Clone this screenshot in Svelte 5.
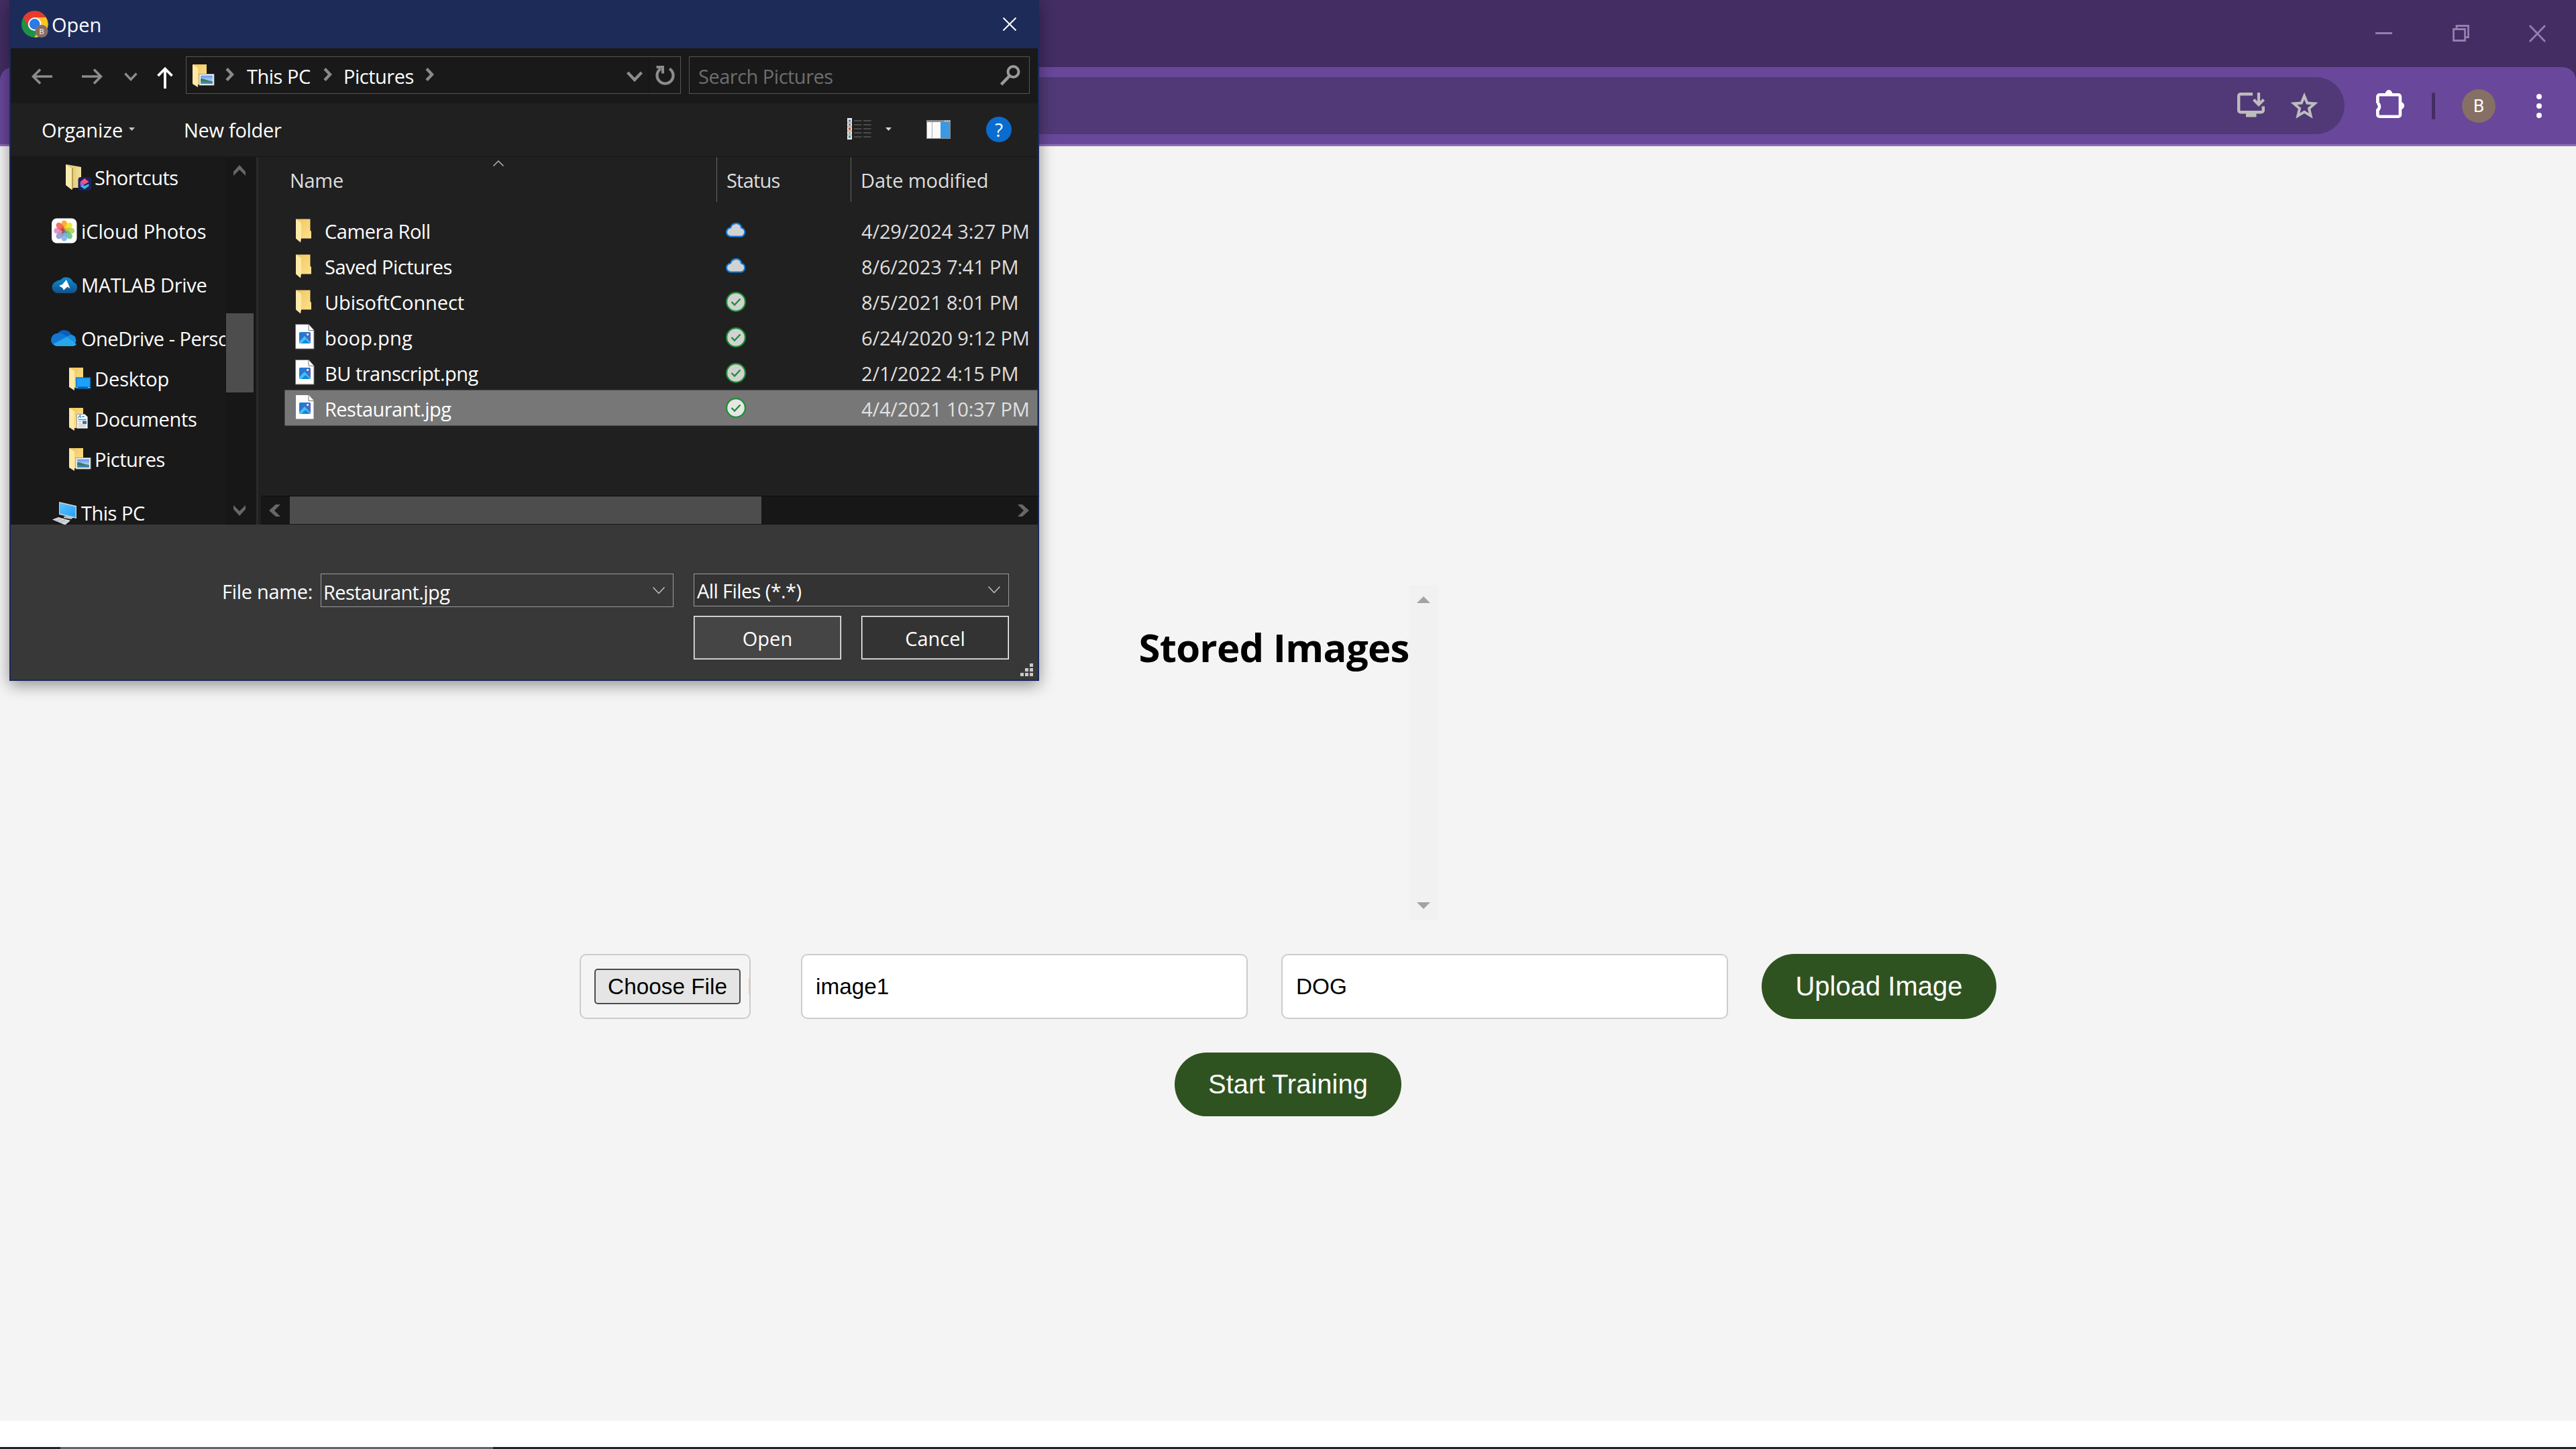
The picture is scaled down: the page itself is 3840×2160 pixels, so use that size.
<script>
  const sidebar = [
    { label: 'Shortcuts', icon: 'shortcuts', child: true, pace: 'snug' },
    { label: 'iCloud Photos', icon: 'icloud', pace: 'even' },
    { label: 'MATLAB Drive', icon: 'matlab', pace: 'close' },
    { label: 'OneDrive - Personal', icon: 'onedrive', pace: 'snug' },
    { label: 'Desktop', icon: 'desktop', child: true, pace: 'even' },
    { label: 'Documents', icon: 'documents', child: true, pace: 'close' },
    { label: 'Pictures', icon: 'pictures', child: true, pace: 'snug' },
    { label: 'This PC', icon: 'pc', pace: 'snug' }
  ];

  const files = [
    { name: 'Camera Roll', kind: 'folder', status: 'cloud', date: '4/29/2024 3:27 PM', pace: 'snug' },
    { name: 'Saved Pictures', kind: 'folder', status: 'cloud', date: '8/6/2023 7:41 PM', pace: 'snug' },
    { name: 'UbisoftConnect', kind: 'folder', status: 'synced', date: '8/5/2021 8:01 PM', pace: 'even' },
    { name: 'boop.png', kind: 'image', status: 'synced', date: '6/24/2020 9:12 PM', pace: 'loose' },
    { name: 'BU transcript.png', kind: 'image', status: 'synced', date: '2/1/2022 4:15 PM', pace: 'snug' },
    { name: 'Restaurant.jpg', kind: 'image', status: 'synced', date: '4/4/2021 10:37 PM', selected: true, pace: 'tight' }
  ];

  const petals = [
    { a: 0, c: '#f9a01b' },
    { a: 45, c: '#f4dd1a' },
    { a: 90, c: '#a9cf46' },
    { a: 135, c: '#62bd7e' },
    { a: 180, c: '#6fb2e6' },
    { a: 225, c: '#8f8fcf' },
    { a: 270, c: '#cf8bc0' },
    { a: 315, c: '#f2584a' }
  ];

  let fileName = 'Restaurant.jpg';
  let imageName = 'image1';
  let imageLabel = 'DOG';
</script>

{#snippet folderShape()}
  <path d="M7 4h21v30H15z" fill="url(#folderBack)" />
  <path d="M7 4l8 5v29l-8-5z" fill="#ffe9a6" />
{/snippet}

{#snippet pictureThumb()}
  <rect x="17" y="18.5" width="22" height="16.5" fill="#fff" stroke="#9a9a9a" stroke-width="1" />
  <rect x="19" y="20.5" width="18" height="12.5" fill="url(#sky)" />
  <path d="M19 25c5 0 9 3 18 4v1.500H19z" fill="#3f7a5c" />
  <path d="M19 30.500l18-1v3.500H19z" fill="#3c86b4" />
{/snippet}

{#snippet chevronRight()}
  <svg class="crumb-chevron" width="13" height="20" viewBox="0 0 13 20"><path d="M2 1.500L10 10L2 18.500" fill="none" stroke="#8a8a8a" stroke-width="4.400" /></svg>
{/snippet}

{#snippet placeIcon(kind)}
  <svg class="place-icon" width="40" height="40" viewBox="0 0 40 40">
    {#if kind === 'shortcuts'}
      <path d="M3 1l22 4v31H12z" fill="url(#folderOld)" />
      <path d="M2 1l9 6v32l-9-7z" fill="#f8ebae" />
      <path d="M11 7l2-1v31l-2 2z" fill="#b99f4e" />
      <rect x="20.500" y="20" width="19.500" height="20" rx="4" fill="#1d1f5c" />
      <path d="M30 22l6.500 5-6.500 4-6.500-4z" fill="#f0577f" />
      <path d="M23.500 27l6.500 4-3 2.500-3.500-2z" fill="#a35ce6" />
      <path d="M30 38l-6.500-4.500 3.500-2 3 1.500 6.500-3v3.500z" fill="#2fb9dd" />
    {:else if kind === 'icloud'}
      <rect x="1" y="1.500" width="37.500" height="37" rx="7.500" fill="#fff" />
      {#each petals as p}
        <rect x="15.500" y="4.500" width="8.500" height="14.500" rx="4.250" fill={p.c} opacity="0.850" transform="rotate({p.a} 19.750 20)" />
      {/each}
      <path d="M15 15l4.700 3.500L22 16l-1 4.500 3 3-4.300-1.500L16 25l1-4.500z" fill="#7d1f24" opacity="0.600" />
    {:else if kind === 'matlab'}
      <path d="M9 33a9 9 0 0 1-1-17.500 7 7 0 0 1 6-2 11 11 0 0 1 19 3 8.500 8.500 0 0 1-1 16.500z" fill="url(#matlabCloud)" />
      <path d="M12 22l5-2 6-7 5.500 13-4-2.500-5.500 5-2-3.500z" fill="#fff" />
    {:else if kind === 'onedrive'}
      <path d="M10 13a12 12 0 0 1 21 3L20 22z" fill="#0a5fb8" />
      <path d="M9 32a9.500 9.500 0 0 1 1-19c3-1 6 0 8 1l11 6-14 12z" fill="#1377d3" />
      <path d="M24 18a9 9 0 0 1 7-3 8.500 8.500 0 0 1 3 15z" fill="#168fe0" />
      <path d="M3 29l21-11 14 11a7 7 0 0 1-6 3H9a9 9 0 0 1-6-3z" fill="#28a6ea" />
    {:else if kind === 'pc'}
      <path d="M12 4l26 6v19L12 23z" fill="#c9ced3" />
      <path d="M13 6l23.500 5.500V27L13 21.500z" fill="url(#screen)" />
      <path d="M19 26l6-1.500 10 2-5 3.500-11-2z" fill="#bcc4ca" />
      <path d="M2 30.500l9-3.500 18 5-8 6.500z" fill="#dde1e4" />
      <path d="M5 30.500l17 5M8 29l17 5M9 33l6-4M14 35l7-4" stroke="#a4abb0" stroke-width="0.800" />
    {:else}
      {@render folderShape()}
      {#if kind === 'desktop'}
        <rect x="17.500" y="19" width="21" height="16" fill="#1ba1ff" stroke="#0f6cb5" stroke-width="1.200" />
        <path d="M18 33.500h21" stroke="#0a5c9c" stroke-width="2" />
        <path d="M18 33.500h1.500M35 33.500h1.500M37.500 33.500h1" stroke="#fff" stroke-width="1.200" />
      {:else if kind === 'documents'}
        <path d="M18.500 13.500h12l4 4v17h-16z" fill="#fff" stroke="#9a9a9a" />
        <path d="M20.500 19l3-4 1 4M26 17h4M20.500 21.500h12" fill="none" stroke="#2a8fd0" stroke-width="1.300" />
        <path d="M20.500 24.500h5M20.500 27h5M20.500 29.500h12M20.500 32h12" stroke="#a9a9a9" stroke-width="1" />
        <rect x="27" y="23.500" width="6" height="4.500" fill="#35709c" />
      {:else}
        {@render pictureThumb()}
      {/if}
    {/if}
  </svg>
{/snippet}

{#snippet fileIcon(kind)}
  <svg class="file-icon" width="32" height="40" viewBox="0 0 32 40">
    {#if kind === 'folder'}
      <path d="M3 2.500h21.500v17l1.500 1.500v10.500H10z" fill="url(#folderBack)" />
      <path d="M3 2.500l8 5.500v23.500l-1 6-7-6z" fill="#ffe9a6" />
    {:else}
      <path d="M2.500 0.500h19.500l8 9v27.500h-27.500z" fill="#fdfdfd" stroke="#777" />
      <path d="M22 0.500v9h8" fill="#fff" stroke="#777" />
      <rect x="8" y="12" width="17" height="17" rx="1.500" fill="url(#photo)" />
      <path d="M8 26.500l8-8.500 9 9.500a1.500 1.500 0 0 1-1.500 1.500h-14a1.500 1.500 0 0 1-1.500-1.500z" fill="#3cc3f8" />
      <path d="M11 29l6.500-6 6.500 6z" fill="#1286da" />
      <circle cx="20.700" cy="15.500" r="1.600" fill="#fff" />
    {/if}
  </svg>
{/snippet}

{#snippet statusIcon(status, selected)}
  <svg class="status-icon" width="30" height="30" viewBox="0 0 30 30">
    {#if status === 'cloud'}
      <path d="M8 23.500a6.500 6.500 0 0 1-1-13 8.500 8.500 0 0 1 15.500-2.500q.5 1 .5 2.500a6.600 6.600 0 0 1-0.500 13z" fill="#d2d2d2" stroke="#0f7bd8" stroke-width="2.200" />
    {:else}
      <circle cx="15" cy="15" r="13.900" fill={selected ? '#e6e6e6' : '#d2d2d2'} stroke="#1c9032" stroke-width="2.200" />
      <path d="M8.500 15l4.500 4.500 8.500-9" fill="none" stroke="#1c9032" stroke-width="2.400" />
    {/if}
  </svg>
{/snippet}

<svg class="defs" width="0" height="0" aria-hidden="true">
  <defs>
    <linearGradient id="folderBack" x1="0" y1="0" x2="1" y2="1"><stop offset="0" stop-color="#eec763" /><stop offset="1" stop-color="#ffe08a" /></linearGradient>
    <linearGradient id="folderOld" x1="0" y1="0" x2="1" y2="0"><stop offset="0" stop-color="#d9bf6c" /><stop offset="1" stop-color="#f3e09a" /></linearGradient>
    <linearGradient id="sky" x1="0" y1="0" x2="0" y2="1"><stop offset="0" stop-color="#5f97ea" /><stop offset="1" stop-color="#e4f1fb" /></linearGradient>
    <linearGradient id="matlabCloud" x1="0" y1="0" x2="0" y2="1"><stop offset="0" stop-color="#0a8fd0" /><stop offset="1" stop-color="#154f8c" /></linearGradient>
    <linearGradient id="screen" x1="0" y1="0" x2="1" y2="1"><stop offset="0" stop-color="#62c0ff" /><stop offset="1" stop-color="#1ba4fb" /></linearGradient>
    <linearGradient id="photo" x1="0" y1="0" x2="1" y2="1"><stop offset="0" stop-color="#117fd8" /><stop offset="1" stop-color="#6f5bb5" /></linearGradient>
  </defs>
</svg>

<div class="screen">
  <header class="tabstrip">
    <svg width="25" height="26" viewBox="0 0 25 26"><path d="M0 12.500h25" stroke="#9280ad" stroke-width="3" /></svg>
    <svg width="25" height="26" viewBox="0 0 25 26"><path d="M1.500 6.500h17v17h-17zM6 5V1.500h17.500v17H19" fill="none" stroke="#9280ad" stroke-width="2.800" /></svg>
    <svg width="25" height="26" viewBox="0 0 25 26"><path d="M1 1l23 24M24 1L1 25" fill="none" stroke="#9280ad" stroke-width="2.800" /></svg>
  </header>

  <div class="toolbar-back">
    <div class="toolbar">
      <div class="omnibox">
        <svg width="41" height="38" viewBox="0 0 41 38">
          <path d="M23 2.200H5a2.800 2.800 0 0 0-2.800 2.800v21.500A2.800 2.800 0 0 0 5 29.300h31a2.800 2.800 0 0 0 2.800-2.800V20.500" fill="none" stroke="#bdbdbd" stroke-width="4.400" />
          <path d="M13 30h15.500v6.500H13z" fill="#bdbdbd" />
          <path d="M32 0v18M24.500 10.500l7.500 7.500 7.500-7.500" fill="none" stroke="#bdbdbd" stroke-width="4.200" />
        </svg>
        <svg width="42" height="40" viewBox="0 0 42 40"><path d="M21 6l4.300 10.500 11.200 0.900-8.500 7.300 2.600 10.900L21 29.800l-9.600 5.800L14 24.700l-8.500-7.300 11.200-0.900z" fill="none" stroke="#bdbdbd" stroke-width="4" /></svg>
      </div>
      <svg class="puzzle" width="43" height="43" viewBox="0 0 43 43">
        <path d="M2.300 20V10a2.800 2.800 0 0 1 2.800-2.800h28a2.800 2.800 0 0 1 2.800 2.800v27a2.800 2.800 0 0 1-2.800 2.800h-28A2.800 2.800 0 0 1 2.300 37V30a6.500 6.500 0 0 0 0-10.500" fill="none" stroke="#fff" stroke-width="4.600" />
        <path d="M13.500 6.500a5.500 6.500 0 0 1 11 0zM36.500 18a5.500 5.500 0 0 1 0 11z" fill="#fff" />
      </svg>
      <span class="divider"></span>
      <span class="avatar">B</span>
      <span class="dots"><i></i><i></i><i></i></span>
    </div>
  </div>

  <main class="page">
    <section class="stored">
      <h2>Stored Images</h2>
      <div class="scrollbar">
        <svg width="20" height="10" viewBox="0 0 20 10"><path d="M10 0l10 10H0z" fill="#a3a3a3" /></svg>
        <svg width="20" height="10" viewBox="0 0 20 10"><path d="M0 0h20L10 10z" fill="#a3a3a3" /></svg>
      </div>
    </section>
    <form class="upload">
      <div class="file-box"><button type="button" class="choose">Choose File</button><span class="clip"></span></div>
      <input class="name-input" type="text" bind:value={imageName} />
      <input type="text" bind:value={imageLabel} />
      <button type="button" class="pill">Upload Image</button>
    </form>
    <button type="button" class="pill start">Start Training</button>
  </main>
  <div class="strip"></div>
  <footer class="taskbar"><span></span></footer>

  <div class="dialog">
    <div class="title">
      <svg width="40" height="40" viewBox="0 0 40 40">
        <circle cx="19.700" cy="20" r="19.700" fill="#1f9147" />
        <path d="M2.700 10A19.700 19.700 0 0 1 36.800 10H19.700L11 25z" fill="#e63b2e" />
        <path d="M36.800 10A19.700 19.700 0 0 1 19 39.700L28.300 25 19.700 10z" fill="#fbc324" />
        <circle cx="19.700" cy="20" r="9.900" fill="#fff" />
        <circle cx="19.700" cy="20" r="7.900" fill="#2c79ea" />
        <circle cx="30" cy="30.500" r="9.500" fill="#8a6e62" />
        <text x="30" y="34.500" text-anchor="middle" font-family="Roboto, sans-serif" font-size="11.500" fill="#eee">B</text>
      </svg>
      <span>Open</span>
      <svg class="close-window" width="20" height="20" viewBox="0 0 20 20"><path d="M0.500 0.500l19 19M19.500 0.500l-19 19" stroke="#fff" stroke-width="2" /></svg>
    </div>

    <nav class="nav">
      <svg class="back" width="31" height="24" viewBox="0 0 31 24"><path d="M13 1.500L2.500 12 13 22.500M2 12h29" fill="none" stroke="#8c8c8c" stroke-width="3.600" /></svg>
      <svg class="forward" width="31" height="24" viewBox="0 0 31 24"><path d="M18 1.500L28.500 12 18 22.500M29 12H0" fill="none" stroke="#8c8c8c" stroke-width="3.600" /></svg>
      <svg class="recent" width="20" height="13" viewBox="0 0 20 13"><path d="M1.500 1.500l8.500 9 8.500-9" fill="none" stroke="#8c8c8c" stroke-width="3.400" /></svg>
      <svg class="up" width="24" height="32" viewBox="0 0 24 32"><path d="M1.500 13L12 2.500 22.500 13M12 3v29" fill="none" stroke="#fff" stroke-width="3.800" /></svg>
      <div class="address">
        <svg class="place-icon" width="40" height="40" viewBox="0 0 40 40">{@render folderShape()}{@render pictureThumb()}</svg>
        {@render chevronRight()}
        <span class="crumb pc snug">This PC</span>
        {@render chevronRight()}
        <span class="crumb pics snug">Pictures</span>
        {@render chevronRight()}
        <svg class="expand" width="24" height="16" viewBox="0 0 24 16"><path d="M1.500 2l10.500 11 10.500-11" fill="none" stroke="#8c8c8c" stroke-width="4.400" /></svg>
        <div class="refresh">
          <svg width="29" height="30" viewBox="0 0 29 30"><path d="M21 4.500A12 12 0 1 1 8 4.500" fill="none" stroke="#8c8c8c" stroke-width="4.200" /><path d="M1.500 2h9.500v9.500" fill="none" stroke="#8c8c8c" stroke-width="4" /></svg>
        </div>
      </div>
      <div class="search">
        <span class="snug">Search Pictures</span>
        <svg width="30" height="31" viewBox="0 0 30 31"><circle cx="19.500" cy="10" r="8" fill="none" stroke="#9a9a9a" stroke-width="4" /><path d="M14 16L1.500 29" stroke="#9a9a9a" stroke-width="4.600" /></svg>
      </div>
    </nav>

    <div class="commands">
      <span class="organize">Organize</span>
      <svg class="caret" width="9" height="5" viewBox="0 0 9 5"><path d="M0 0h9L4.500 5z" fill="#c4c4c4" /></svg>
      <span class="new-folder close">New folder</span>
      <svg class="view" width="36" height="32" viewBox="0 0 36 32">
        <rect width="7" height="32" fill="#ececec" />
        <path d="M10 4h11.500M24 4h11.500M10 10h11.500M24 10h11.500M10 16h11.500M24 16h11.500M10 22h11.500M24 22h11.500M10 28h11.500M24 28h11.500" stroke="#777" stroke-width="1.200" />
        <path d="M0 7h7M0 13h7M0 19h7M0 25h7" stroke="#8d8d8d" />
        <path d="M2 4h3M2 28h3" stroke="#3f78a8" stroke-width="3" />
        <path d="M2 10h3" stroke="#8a6f6a" stroke-width="3" /><path d="M2 16h3" stroke="#c8321f" stroke-width="3" /><path d="M2 22h3" stroke="#8db15a" stroke-width="3" />
      </svg>
      <svg class="caret" width="9" height="5" viewBox="0 0 9 5"><path d="M0 0h9L4.500 5z" fill="#d4d4d4" /></svg>
      <svg class="preview" width="36" height="28" viewBox="0 0 36 28">
        <rect width="36" height="28" fill="#8d8d8d" /><rect x="1" y="3" width="34" height="24" fill="#fafafa" /><path d="M8.500 3v24" stroke="#aaa" /><rect x="21" y="3" width="14" height="24" fill="#3c98e2" /><path d="M27 1.500h2M30 1.500h2M33 1.500h2" stroke="#ddd" stroke-width="1.400" />
      </svg>
      <span class="help">?</span>
    </div>

    <div class="browser">
      <aside>
        <ul>
          {#each sidebar as item}
            <li class:child={item.child}>
              {@render placeIcon(item.icon)}
              <span class={item.pace}>{item.label}</span>
            </li>
          {/each}
        </ul>
        <div class="side-scroll">
          <svg width="18" height="16" viewBox="0 0 18 16"><path d="M0 10L9 0l9 10v6L9 7l-9 9z" fill="#676767" /></svg>
          <div class="side-thumb"></div>
          <svg class="down" width="18" height="16" viewBox="0 0 18 16"><path d="M0 6l9 10 9-10V0L9 9 0 0z" fill="#676767" /></svg>
        </div>
      </aside>
      <div class="splitter"></div>
      <div class="listing">
        <div class="columns">
          <div class="col name"><span class="close">Name</span>
            <svg class="sort" width="16" height="9" viewBox="0 0 16 9"><path d="M0.500 8.500L8 1l7.500 7.500" fill="none" stroke="#b5b5b5" stroke-width="1.500" /></svg>
          </div>
          <div class="col status"><span class="packed">Status</span></div>
          <div class="col"><span class="even">Date modified</span></div>
        </div>
        <div class="rows">
          {#each files as f}
            <div class="row" class:selected={f.selected}>
              {@render fileIcon(f.kind)}
              <span class="file-name {f.pace}">{f.name}</span>
              {@render statusIcon(f.status, f.selected)}
              <span class="date">{f.date}</span>
            </div>
          {/each}
        </div>
        <div class="h-scroll">
          <svg width="17" height="18" viewBox="0 0 17 18"><path d="M10 0L0 9l10 9h7L8 9l9-9z" fill="#676767" /></svg>
          <div class="h-thumb"></div>
          <svg class="right" width="17" height="18" viewBox="0 0 17 18"><path d="M7 0l10 9-10 9H0l9-9-9-9z" fill="#676767" /></svg>
        </div>
      </div>
    </div>

    <div class="foot">
      <div class="fields">
        <label class="close" for="fname">File name:</label>
        <div class="combo">
          <input id="fname" class="tight" bind:value={fileName} />
          <svg width="18" height="11" viewBox="0 0 18 11"><path d="M0.500 0.500L9 9.500l8.500-9" fill="none" stroke="#c4c4c4" stroke-width="1.500" /></svg>
        </div>
        <div class="filter">
          <span class="tight">All Files (*.*)</span>
          <svg width="18" height="11" viewBox="0 0 18 11"><path d="M0.500 0.500L9 9.500l8.500-9" fill="none" stroke="#c4c4c4" stroke-width="1.500" /></svg>
        </div>
      </div>
      <div class="actions">
        <button type="button" class="open">Open</button>
        <button type="button">Cancel</button>
      </div>
      <svg class="grip" width="19" height="19" viewBox="0 0 19 19"><path d="M14 0h5v5h-5zM7 7h5v5H7zM14 7h5v5h-5zM0 14h5v5H0zM7 14h5v5H7zM14 14h5v5h-5z" fill="#c9c9c9" /></svg>
    </div>
  </div>
</div>

<style>
  :global(body) { margin: 0; overflow: hidden; }
  svg { display: block; flex: none; }
  .defs { position: absolute; }
  button, input { margin: 0; }

  .screen {
    position: relative;
    display: flex;
    flex-direction: column;
    width: 3840px;
    height: 2160px;
    overflow: hidden;
    background: #f4f4f4;
  }

  /* letter spacing steps */
  .loose { letter-spacing: 0.2px; }
  .even { letter-spacing: -0.1px; }
  .close { letter-spacing: -0.3px; }
  .snug { letter-spacing: -0.5px; }
  .tight { letter-spacing: -0.6px; }
  .packed { letter-spacing: -0.8px; }

  /* browser chrome */
  .tabstrip {
    display: flex;
    justify-content: flex-end;
    gap: 89.500px;
    height: 63px;
    padding: 37px 45px 0 0;
    background: #432d63;
  }
  .toolbar-back { height: 118px; background: #432d63; }
  .toolbar {
    display: flex;
    align-items: center;
    box-sizing: border-box;
    height: 118px;
    padding-left: 400px;
    border-bottom: 3px solid #8d6fb5;
    border-radius: 20px 20px 0 0;
    background: #69479b;
  }
  .omnibox {
    display: flex;
    align-items: center;
    justify-content: flex-end;
    gap: 38px;
    box-sizing: border-box;
    width: 3095px;
    height: 85px;
    padding: 0 39.500px 2px 0;
    border-radius: 43px;
    background: #503976;
  }
  .puzzle { margin: -5px 0 0 47px; }
  .divider { width: 5px; height: 40px; margin-left: 40px; border-radius: 2px; background: #432d63; }
  .avatar {
    width: 50px;
    height: 50px;
    margin-left: 40px;
    border-radius: 50%;
    background: #867065;
    color: #fff;
    font: 26px/51px Roboto, sans-serif;
    text-align: center;
  }
  .dots { display: flex; flex-direction: column; gap: 6px; margin-left: 61px; }
  .dots i { width: 8px; height: 8px; border-radius: 50%; background: #fff; }

  /* web page */
  .page {
    display: flex;
    flex-direction: column;
    align-items: center;
    box-sizing: border-box;
    height: 1900px;
    padding-top: 654px;
    background: #f4f4f4;
    font-family: 'Liberation Sans', Arial, sans-serif;
  }
  .stored { display: flex; width: 445px; height: 500px; }
  h2 {
    width: 403.500px;
    margin: 55px 0 0;
    color: #000;
    font: bold 58px/76px 'Open Sans', sans-serif;
    letter-spacing: -0.720px;
    white-space: nowrap;
  }
  .scrollbar {
    display: flex;
    flex-direction: column;
    justify-content: space-between;
    align-items: center;
    box-sizing: border-box;
    width: 41.500px;
    padding: 17px 0;
    background: #f1f1f1;
  }
  .upload { display: flex; gap: 50px; margin-top: 50px; }
  .upload input {
    box-sizing: border-box;
    width: 666px;
    height: 97px;
    padding: 0 20px;
    border: 2px solid #ccc;
    border-radius: 10px;
    background: #fff;
    color: #000;
    font: 33.333px 'Liberation Sans', Arial, sans-serif;
  }
  .upload .name-input { margin-left: 25px; }
  .file-box {
    display: flex;
    align-items: center;
    justify-content: space-between;
    box-sizing: border-box;
    width: 255px;
    height: 97px;
    padding-left: 20px;
    border: 2px solid #ccc;
    border-radius: 10px;
  }
  .choose {
    width: 218px;
    height: 53px;
    padding: 0;
    border: 2px solid #4d4d4d;
    border-radius: 5px;
    background: #e5e5e5;
    color: #000;
    font: 33.333px/49px 'Liberation Sans', Arial, sans-serif;
  }
  .clip { width: 1px; height: 24px; background: #f3d09a; }
  .pill {
    width: 350px;
    height: 97px;
    padding: 0;
    border: 0;
    border-radius: 50px;
    background: #2f5320;
    color: #fff;
    font: 40px 'Liberation Sans', Arial, sans-serif;
  }
  .start { width: 338px; height: 95px; margin-top: 50px; }
  .strip { height: 39px; background: #fff; }
  .taskbar { display: flex; height: 3px; padding-left: 90px; background: #22222c; }
  .taskbar span { width: 645px; background: #63636d; }

  /* file dialog window */
  .dialog {
    position: absolute;
    left: 14px;
    top: 0;
    display: flex;
    flex-direction: column;
    box-sizing: border-box;
    width: 1535px;
    height: 1015px;
    border: 2px solid #1b2a5b;
    border-top: 0;
    background: #383838;
    box-shadow: 0 6px 22px rgba(0, 0, 0, 0.42);
    color: #fff;
    font: 29px/40px 'Open Sans', 'Segoe UI', sans-serif;
    white-space: nowrap;
  }
  .title {
    display: flex;
    align-items: center;
    height: 72px;
    padding: 0 32px 0 16px;
    background: #1d2b58;
  }
  .title span { margin: 2px 0 0 5px; }
  .close-window { margin-left: auto; margin-top: -1px; }

  .nav { display: flex; align-items: center; height: 82px; background: #191919; }
  .back { margin: 2px 0 0 31px; }
  .forward { margin: 2px 0 0 44px; }
  .recent { margin: 2px 0 0 32px; }
  .up { margin: 6px 0 0 29px; }
  .address, .search {
    display: flex;
    align-items: center;
    box-sizing: border-box;
    height: 56px;
    margin-top: -2px;
    border: 1px solid #555;
  }
  .address { width: 738px; margin-left: 19px; padding-left: 2px; }
  .crumb-chevron { margin-top: -3px; }
  .address .place-icon + .crumb-chevron { margin-left: 16px; }
  .crumb { margin-top: 3px; }
  .crumb.pc { width: 114px; margin-left: 19px; }
  .crumb.pics { width: 122px; margin-left: 17px; }
  .expand { margin-left: auto; margin-top: 4px; }
  .refresh {
    display: flex;
    align-items: center;
    box-sizing: border-box;
    height: 54px;
    margin-left: 9px;
    padding: 2px 8px 0 9px;
    border-left: 1px solid #131313;
  }
  .search {
    justify-content: space-between;
    width: 508px;
    margin-left: 12px;
    padding: 0 13px 0 13px;
    color: #6e6e6e;
  }
  .search span { margin-top: 3px; }

  .commands {
    display: flex;
    align-items: center;
    box-sizing: border-box;
    height: 80px;
    padding-bottom: 1px;
    border-bottom: 1px solid #171717;
    background: #202020;
  }
  .organize { width: 130px; margin: 2px 0 0 46px; }
  .caret { margin-top: -2px; }
  .new-folder { margin: 2px 0 0 73px; }
  .commands .view { margin: -2px 0 0 auto; }
  .commands .view + .caret { margin-left: 21px; }
  .preview { margin: -1px 0 0 52px; }
  .help {
    width: 38px;
    height: 38px;
    margin: -1px 39px 0 53px;
    border-radius: 50%;
    background: #0a6cce;
    font-size: 28px;
    line-height: 38px;
    text-align: center;
  }

  .browser { display: flex; height: 548px; overflow: hidden; }
  aside { display: flex; width: 364px; background: #191919; }
  ul { width: 320px; margin: 0; padding: 0; overflow: hidden; list-style: none; }
  li { display: flex; align-items: center; gap: 5px; height: 60px; margin-top: 20px; padding-left: 60px; }
  li.child { margin-top: 0; padding-left: 80px; }
  li span { padding-top: 2px; }
  .side-scroll {
    display: flex;
    flex-direction: column;
    align-items: center;
    box-sizing: border-box;
    width: 44px;
    padding: 12px 3px 13px 0;
    background: #171717;
  }
  .side-thumb { width: 41px; height: 118px; margin: 205px 0 0 1px; background: #4d4d4d; }
  .side-scroll .down { margin-top: auto; }
  .splitter { box-sizing: border-box; width: 5px; border-left: 2px solid #191919; background: #2b2b2b; }

  .listing { display: flex; flex: 1; flex-direction: column; background: #202020; }
  .columns { display: flex; height: 67px; color: #dedede; }
  .col { box-sizing: border-box; padding: 15px 0 0 14px; }
  .col.name { display: flex; width: 684px; padding-left: 47px; border-right: 1px solid #666; }
  .col.status { width: 200px; padding-left: 14px; border-right: 1px solid #666; }
  .sort { margin: -10px 0 0 223px; }
  .rows { flex: 1; padding: 16px 0 0 39px; }
  .row {
    display: flex;
    align-items: center;
    height: 53px;
    padding-left: 14px;
  }
  .row.selected { margin-top: -1px; height: 54px; background: #777; box-shadow: inset 0 0 0 1px #4c4c4c; }
  .row.selected .date { color: #e0e0e0; }
  .file-name { width: 598px; margin-left: 14px; padding-top: 3px; }
  .date { margin-left: 172px; padding-top: 3px; color: #dedede; letter-spacing: -0.150px; }

  .h-scroll {
    display: flex;
    align-items: center;
    box-sizing: border-box;
    height: 43px;
    margin-left: 4px;
    padding: 0 13px 0 12px;
    border-top: 1px solid #0c0c0c;
    background: #171717;
  }
  .h-thumb { width: 703px; height: 41px; margin: -1px 0 0 14px; background: #4d4d4d; }
  .h-scroll .right { margin-left: auto; }

  .foot {
    display: flex;
    flex: 1;
    flex-direction: column;
    box-sizing: border-box;
    padding: 73px 0 0 315px;
    background: #383838;
  }
  .fields { display: flex; align-items: flex-start; }
  label { width: 147px; margin-top: 7px; }
  .combo, .filter {
    display: flex;
    align-items: center;
    justify-content: space-between;
    box-sizing: border-box;
    border: 1px solid #9b9b9b;
  }
  .combo { width: 526px; height: 50px; padding: 0 12px 0 3px; }
  .combo input {
    box-sizing: border-box;
    width: 400px;
    height: 46px;
    padding: 4px 0 0;
    border: 0;
    outline: 0;
    background: transparent;
    color: #fff;
    font: inherit;
  }
  .filter { width: 470px; height: 49px; margin-left: 30px; padding: 0 12px 0 4px; background: #333; }
  .filter span { margin-top: 3px; }
  .actions { display: flex; gap: 30px; margin: 13px 0 0 703px; }
  .actions button {
    width: 220px;
    height: 65px;
    padding: 3px 0 0;
    border: 1px solid #fff;
    box-shadow: inset 0 0 0 1px #9b9b9b;
    background: #333;
    color: #fff;
    font: inherit;
  }
  .actions .open { background: #454545; }
  .grip { margin: 6px 0 0 1190px; }
</style>
